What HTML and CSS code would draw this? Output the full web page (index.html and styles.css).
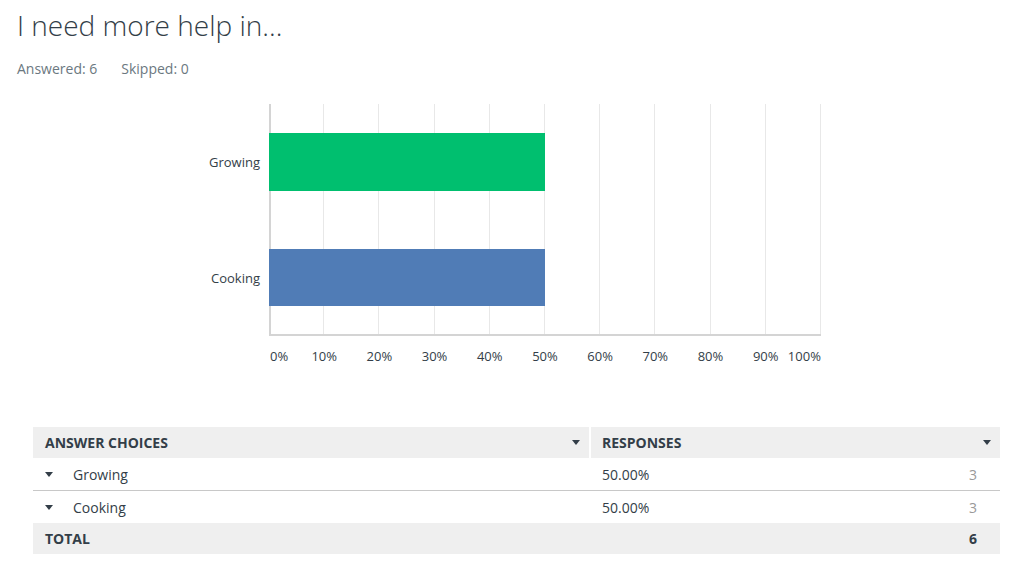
FILE: index.html
```html
<!DOCTYPE html>
<html>
<head>
<meta charset="utf-8">
<link rel="stylesheet" href="styles.css">
</head>
<body>
<h1 class="title">I need more help in...</h1>
<div class="meta"><span>Answered: 6</span><span>Skipped: 0</span></div>

<div class="chart">
  <div class="chart-row">
    <div class="ylabels">
      <div class="ylabel">Growing</div>
      <div class="ylabel">Cooking</div>
    </div>
    <div class="plot">
      <div class="bar bar-green" style="width:50%"></div>
      <div class="bar bar-blue" style="width:50%"></div>
    </div>
  </div>
  <div class="xaxis">
    <span class="tick first"><span>0%</span></span>
    <span class="tick"><span>10%</span></span>
    <span class="tick"><span>20%</span></span>
    <span class="tick"><span>30%</span></span>
    <span class="tick"><span>40%</span></span>
    <span class="tick"><span>50%</span></span>
    <span class="tick"><span>60%</span></span>
    <span class="tick"><span>70%</span></span>
    <span class="tick"><span>80%</span></span>
    <span class="tick"><span>90%</span></span>
    <span class="tick last"><span>100%</span></span>
  </div>
</div>

<div class="table">
  <div class="cell head c1"><span>ANSWER CHOICES</span><i class="caret"></i></div>
  <div class="cell head c2"><span>RESPONSES</span><i class="caret"></i></div>

  <div class="cell row r1 c1"><i class="caret"></i><span class="choice">Growing</span></div>
  <div class="cell row r1 c2"><span>50.00%</span><span class="count">3</span></div>

  <div class="cell row r2 c1"><i class="caret"></i><span class="choice">Cooking</span></div>
  <div class="cell row r2 c2"><span>50.00%</span><span class="count">3</span></div>

  <div class="cell total c1"><span>TOTAL</span></div>
  <div class="cell total c2"><span></span><span class="count-total">6</span></div>
</div>
</body>
</html>
```

FILE: styles.css
```css
html, body {
  margin: 0;
  padding: 0;
  background: #fff;
}
body {
  font-family: "Open Sans", "Liberation Sans", sans-serif;
  color: #333e48;
}
.title {
  margin: 9px 0 0 17px;
  font-size: 28px;
  line-height: 32px;
  font-weight: 300;
  color: #333e48;
  letter-spacing: 0;
}
.meta {
  margin: 18px 0 0 17px;
  font-size: 14px;
  line-height: 20px;
  color: #6b787f;
  display: flex;
  gap: 24px;
}
.chart {
  margin-top: 25px;
}
.chart-row {
  display: flex;
}
.ylabels {
  width: 260px;
  padding-right: 9px;
  padding-top: 29px;
  display: flex;
  flex-direction: column;
  align-items: flex-end;
  gap: 58px;
}
.ylabel {
  height: 58px;
  display: flex;
  align-items: center;
  font-size: 13px;
  color: #333e48;
}
.plot {
  width: 552px;
  height: 232px;
  box-sizing: border-box;
  padding: 29px 0 28px;
  border-bottom: 2px solid #d4d4d4;
  display: flex;
  flex-direction: column;
  gap: 58px;
  background-image:
    linear-gradient(#d4d4d4, #d4d4d4),
    repeating-linear-gradient(to right, transparent 0, transparent 54.2px, #e8e8e8 54.2px, #e8e8e8 55.2px);
  background-size: 2px 100%, 100% 100%;
  background-repeat: no-repeat;
}
.bar {
  height: 58px;
  flex: none;
}
.bar-green {
  background: #00bf6f;
}
.bar-blue {
  background: #507cb6;
  height: 57px;
}
.xaxis {
  margin: 11px 0 0 269px;
  width: 552px;
  display: flex;
  justify-content: space-between;
  font-size: 13px;
  line-height: 18px;
  color: #333e48;
}
.tick {
  width: 0;
  display: flex;
  justify-content: center;
  white-space: nowrap;
}
.tick.first {
  justify-content: flex-start;
}
.tick.first span {
  margin-left: 1px;
}
.tick.last {
  justify-content: flex-end;
}
.table {
  margin: 62px 0 0 33px;
  width: 967px;
  display: grid;
  grid-template-columns: 556px 411px;
  font-size: 14px;
  color: #333e48;
}
.cell {
  display: flex;
  align-items: center;
  box-sizing: border-box;
}
.head {
  height: 31px;
  background: #efefef;
  font-weight: 700;
  justify-content: space-between;
}
.head.c1 {
  padding: 0 9px 0 12px;
}
.head.c2 {
  border-left: 2px solid #fff;
  padding: 0 9px 0 11px;
}
.caret {
  display: block;
  width: 0;
  height: 0;
  border-left: 4.5px solid transparent;
  border-right: 4.5px solid transparent;
  border-top: 5px solid #333e48;
}
.row {
  height: 33px;
}
.r1 {
  border-bottom: 1px solid #c8c8c8;
}
.r2 {
  height: 32px;
}
.row.c1 {
  padding-left: 12px;
}
.row.c1 .caret {
  margin-right: 20px;
}
.row.c2, .total.c2 {
  padding: 0 23px 0 13px;
  justify-content: space-between;
}
.count {
  color: #999;
}
.total {
  height: 31px;
  background: #efefef;
  font-weight: 700;
}
.total.c1 {
  padding-left: 12px;
}
```
